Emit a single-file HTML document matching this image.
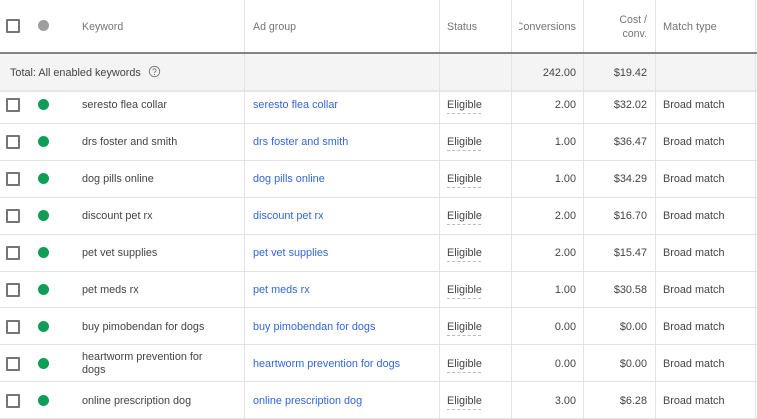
<!DOCTYPE html>
<html><head><meta charset="utf-8">
<style>
html,body{margin:0;padding:0;background:#fff}
body{width:757px;height:419px;position:relative;overflow:hidden;font-family:"Liberation Sans",sans-serif;font-size:10.85px;color:#444}
.a{position:absolute;white-space:nowrap;line-height:14px;margin-top:1px}
.h{color:#757575;font-size:10.6px}
.l{color:#3367d6}
.r{text-align:right}
.hl{position:absolute;left:0;width:757px;height:1px;background:#e3e3e3}
.vl{position:absolute;top:0;width:1px;height:419px;background:#e3e3e3}
.cb{position:absolute;left:6px;width:10px;height:10px;border:2px solid #757575;border-radius:1px}
.dot{position:absolute;left:38px;width:11px;height:11px;border-radius:50%;background:#0f9d58}
.dash{position:absolute;left:447px;width:34px;height:0;border-top:1px dashed #bbb}
</style></head><body>
<div style="position:absolute;left:0;top:54px;width:757px;height:36px;background:#f4f4f4"></div>
<div class="hl" style="top:90px;height:2px;background:#e6e6e6"></div>
<div class="hl" style="top:123px"></div><div class="hl" style="top:160px"></div><div class="hl" style="top:197px"></div>
<div class="hl" style="top:234px"></div><div class="hl" style="top:271px"></div><div class="hl" style="top:307px"></div>
<div class="hl" style="top:344px"></div><div class="hl" style="top:381px"></div><div class="hl" style="top:418px"></div>
<div class="vl" style="left:244px"></div><div class="vl" style="left:439px"></div><div class="vl" style="left:511px"></div>
<div class="vl" style="left:583px"></div><div class="vl" style="left:655px"></div><div class="vl" style="left:755px"></div>
<div class="hl" style="top:52px;height:2px;background:#848484"></div>

<div class="cb" style="top:19px"></div>
<div class="dot" style="top:20px;background:#9e9e9e"></div>
<div class="a h" style="left:82px;top:19px">Keyword</div>
<div class="a h" style="left:253px;top:19px">Ad group</div>
<div class="a h" style="left:447px;top:19px">Status</div>
<div class="a h r" style="left:519px;width:57px;top:19px;overflow:hidden;direction:rtl;font-size:10.9px">Conversions</div>
<div class="a h r" style="left:584px;width:63px;top:12px">Cost /</div>
<div class="a h r" style="left:584px;width:63px;top:26px">conv.</div>
<div class="a h" style="left:663px;top:19px;font-size:11px">Match type</div>

<div class="a" style="left:10px;top:65px">Total: All enabled keywords</div>
<svg style="position:absolute;left:148px;top:65px" width="13" height="13" viewBox="0 0 13 13" fill="none"><circle cx="6.5" cy="6.5" r="5.2" stroke="#757575" stroke-width=".9"/><path d="M4.9 5.3a1.6 1.6 0 1 1 2.5 1.3c-.6.4-.9.7-.9 1.3" stroke="#757575" stroke-width=".9"/><circle cx="6.5" cy="9.5" r=".6" fill="#757575"/></svg>
<div class="a r" style="left:512px;width:64px;top:65px">242.00</div>
<div class="a r" style="left:584px;width:63px;top:65px">$19.42</div>

<div class="cb" style="top:98px"></div><div class="dot" style="top:99px"></div>
<div class="a" style="left:82px;top:97px">seresto flea collar</div><div class="a l" style="left:253px;top:97px">seresto flea collar</div>
<div class="a" style="left:447px;top:97px">Eligible</div><div class="dash" style="top:113px"></div>
<div class="a r" style="left:512px;width:64px;top:97px">2.00</div><div class="a r" style="left:584px;width:63px;top:97px">$32.02</div><div class="a" style="left:663px;top:97px">Broad match</div>

<div class="cb" style="top:135px"></div><div class="dot" style="top:136px"></div>
<div class="a" style="left:82px;top:134px">drs foster and smith</div><div class="a l" style="left:253px;top:134px">drs foster and smith</div>
<div class="a" style="left:447px;top:134px">Eligible</div><div class="dash" style="top:150px"></div>
<div class="a r" style="left:512px;width:64px;top:134px">1.00</div><div class="a r" style="left:584px;width:63px;top:134px">$36.47</div><div class="a" style="left:663px;top:134px">Broad match</div>

<div class="cb" style="top:172px"></div><div class="dot" style="top:173px"></div>
<div class="a" style="left:82px;top:171px">dog pills online</div><div class="a l" style="left:253px;top:171px">dog pills online</div>
<div class="a" style="left:447px;top:171px">Eligible</div><div class="dash" style="top:187px"></div>
<div class="a r" style="left:512px;width:64px;top:171px">1.00</div><div class="a r" style="left:584px;width:63px;top:171px">$34.29</div><div class="a" style="left:663px;top:171px">Broad match</div>

<div class="cb" style="top:209px"></div><div class="dot" style="top:210px"></div>
<div class="a" style="left:82px;top:208px">discount pet rx</div><div class="a l" style="left:253px;top:208px">discount pet rx</div>
<div class="a" style="left:447px;top:208px">Eligible</div><div class="dash" style="top:224px"></div>
<div class="a r" style="left:512px;width:64px;top:208px">2.00</div><div class="a r" style="left:584px;width:63px;top:208px">$16.70</div><div class="a" style="left:663px;top:208px">Broad match</div>

<div class="cb" style="top:246px"></div><div class="dot" style="top:247px"></div>
<div class="a" style="left:82px;top:245px">pet vet supplies</div><div class="a l" style="left:253px;top:245px">pet vet supplies</div>
<div class="a" style="left:447px;top:245px">Eligible</div><div class="dash" style="top:261px"></div>
<div class="a r" style="left:512px;width:64px;top:245px">2.00</div><div class="a r" style="left:584px;width:63px;top:245px">$15.47</div><div class="a" style="left:663px;top:245px">Broad match</div>

<div class="cb" style="top:283px"></div><div class="dot" style="top:284px"></div>
<div class="a" style="left:82px;top:282px">pet meds rx</div><div class="a l" style="left:253px;top:282px">pet meds rx</div>
<div class="a" style="left:447px;top:282px">Eligible</div><div class="dash" style="top:298px"></div>
<div class="a r" style="left:512px;width:64px;top:282px">1.00</div><div class="a r" style="left:584px;width:63px;top:282px">$30.58</div><div class="a" style="left:663px;top:282px">Broad match</div>

<div class="cb" style="top:320px"></div><div class="dot" style="top:321px"></div>
<div class="a" style="left:82px;top:319px">buy pimobendan for dogs</div><div class="a l" style="left:253px;top:319px">buy pimobendan for dogs</div>
<div class="a" style="left:447px;top:319px">Eligible</div><div class="dash" style="top:335px"></div>
<div class="a r" style="left:512px;width:64px;top:319px">0.00</div><div class="a r" style="left:584px;width:63px;top:319px">$0.00</div><div class="a" style="left:663px;top:319px">Broad match</div>

<div class="cb" style="top:357px"></div><div class="dot" style="top:358px"></div>
<div class="a" style="left:82px;top:349px">heartworm prevention for</div><div class="a" style="left:82px;top:362px">dogs</div>
<div class="a l" style="left:253px;top:356px">heartworm prevention for dogs</div>
<div class="a" style="left:447px;top:356px">Eligible</div><div class="dash" style="top:372px"></div>
<div class="a r" style="left:512px;width:64px;top:356px">0.00</div><div class="a r" style="left:584px;width:63px;top:356px">$0.00</div><div class="a" style="left:663px;top:356px">Broad match</div>

<div class="cb" style="top:394px"></div><div class="dot" style="top:395px"></div>
<div class="a" style="left:82px;top:393px">online prescription dog</div><div class="a l" style="left:253px;top:393px">online prescription dog</div>
<div class="a" style="left:447px;top:393px">Eligible</div><div class="dash" style="top:409px"></div>
<div class="a r" style="left:512px;width:64px;top:393px">3.00</div><div class="a r" style="left:584px;width:63px;top:393px">$6.28</div><div class="a" style="left:663px;top:393px">Broad match</div>
</body></html>
